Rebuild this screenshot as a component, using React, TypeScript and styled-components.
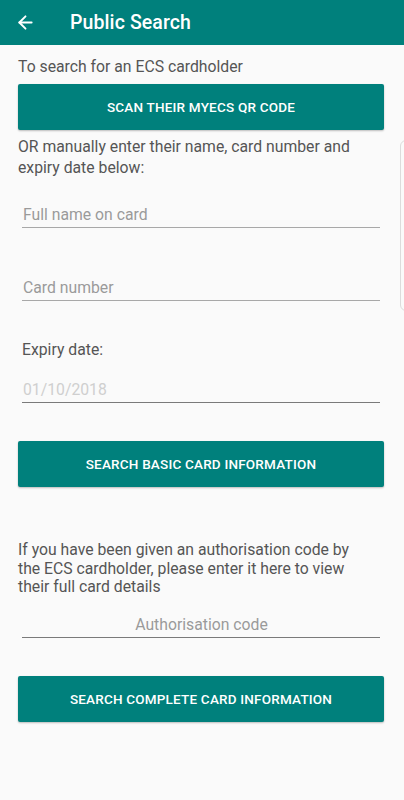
import React from "react";
import styled, { createGlobalStyle } from "styled-components";
import { ArrowLeft } from "lucide-react";

const Global = createGlobalStyle`
  html, body { margin: 0; padding: 0; background: #fafafa; }
  body { font-family: Roboto, "Noto Sans", Arial, sans-serif; }
  * { box-sizing: border-box; }
`;

const TEAL = "#00807c";

const Screen = styled.div`
  position: relative;
  width: 404px;
  height: 800px;
  background: #fafafa;
  overflow: hidden;
`;

const AppBar = styled.header`
  height: 45px;
  background: ${TEAL};
  display: flex;
  align-items: center;
  padding-left: 15px;
  color: #fff;
`;

const BackButton = styled.span`
  display: flex;
  align-items: center;
  width: 22px;
  margin-right: 33px;
`;

const Title = styled.h1`
  margin: 0;
  font-size: 19.5px;
  font-weight: 500;
  letter-spacing: 0.1px;
`;

const Content = styled.main`
  display: flex;
  flex-direction: column;
  padding: 0 20px 0 18px;
`;

const Text = styled.p<{ $mt: number; $lh?: number }>`
  margin: ${(p) => p.$mt}px 12px 0 0;
  font-size: 15.75px;
  line-height: ${(p) => p.$lh ?? 20}px;
  color: #555;
`;

const Label = styled(Text)`
  padding-left: 4px;
`;

const Button = styled.button<{ $mt: number }>`
  margin-top: ${(p) => p.$mt}px;
  height: 46px;
  width: 100%;
  border: none;
  border-radius: 2px;
  background: ${TEAL};
  color: #fff;
  font-family: Roboto, Arial, sans-serif;
  font-size: 13.5px;
  font-weight: 500;
  letter-spacing: 0.2px;
  box-shadow: 0 1px 2px rgba(0, 0, 0, 0.25);
`;

const Field = styled.div<{ $mt: number; $center?: boolean; $dim?: boolean; $dark?: boolean }>`
  margin: ${(p) => p.$mt}px 4px 0;
  padding: 5px 0 2px 1px;
  font-size: 15.75px;
  line-height: 20px;
  color: ${(p) => (p.$dim ? "#cfcfcf" : "#9a9a9a")};
  text-align: ${(p) => (p.$center ? "center" : "left")};
  border-bottom: 1px solid ${(p) => (p.$dark ? "#7a7a7a" : "#a8a8a8")};
`;

const EdgeHandle = styled.div`
  position: absolute;
  left: 400px;
  top: 140px;
  width: 12px;
  height: 171px;
  border: 1px solid #dcdcdc;
  border-radius: 6px;
`;

export default function App() {
  return (
    <Screen>
      <Global />
      <AppBar>
        <BackButton>
          <ArrowLeft size={21} strokeWidth={2.2} />
        </BackButton>
        <Title>Public Search</Title>
      </AppBar>
      <Content>
        <Text $mt={12}>To search for an ECS cardholder</Text>
        <Button $mt={7}>SCAN THEIR MYECS QR CODE</Button>
        <Text $mt={7} $lh={20.5}>
          OR manually enter their name, card number and expiry date below:
        </Text>
        <Field $mt={22}>Full name on card</Field>
        <Field $mt={45}>Card number</Field>
        <Label $mt={39}>Expiry date:</Label>
        <Field $mt={15} $dim $dark>01/10/2018</Field>
        <Button $mt={38}>SEARCH BASIC CARD INFORMATION</Button>
        <Text $mt={54} $lh={18.5}>
          If you have been given an authorisation code by the ECS cardholder, please enter it here to view
          their full card details
        </Text>
        <Field $mt={13} $center $dark>Authorisation code</Field>
        <Button $mt={38}>SEARCH COMPLETE CARD INFORMATION</Button>
      </Content>
      <EdgeHandle />
    </Screen>
  );
}
